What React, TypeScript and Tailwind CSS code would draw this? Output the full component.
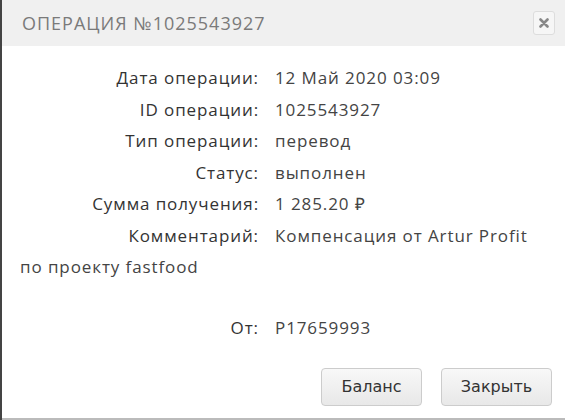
import React from 'react';

const rows: { label: string; value: string }[] = [
  { label: 'Дата операции:', value: '12 Май 2020 03:09' },
  { label: 'ID операции:', value: '1025543927' },
  { label: 'Тип операции:', value: 'перевод' },
  { label: 'Статус:', value: 'выполнен' },
  { label: 'Сумма получения:', value: '1 285.20 ₽' },
  { label: 'Комментарий:', value: 'Компенсация от Artur Profit' },
];

const Row: React.FC<{ label: string; value: string }> = ({ label, value }) => (
  <div className="flex h-[31.5px] items-center">
    <div className="w-[257px] text-right text-[#333]">{label}</div>
    <div className="pl-[16px] text-[#444]">{value}</div>
  </div>
);

const App: React.FC = () => {
  return (
    <div
      className="relative h-[420px] w-[565px] overflow-hidden border-l-2 border-l-[#444] bg-white"
      style={{ fontFamily: '"Open Sans", sans-serif' }}
    >
      <div className="flex h-[46px] items-center justify-between bg-[#f0f0f0] pl-[20px] pr-[10px]">
        <h1 className="text-[18px] tracking-[1px] text-[#7a7a7a]">ОПЕРАЦИЯ №1025543927</h1>
        <button className="flex h-[24px] w-[22px] items-center justify-center rounded-[3px] border border-[#ddd] bg-[#f6f6f6]">
          <svg width="10" height="10" viewBox="0 0 10 10">
            <path d="M1.5 1.5 L8.5 8.5 M8.5 1.5 L1.5 8.5" stroke="#888" strokeWidth="2.6" strokeLinecap="round" />
          </svg>
        </button>
      </div>

      <div className="pt-[16px] text-[17px] tracking-[0.9px]">
        {rows.map((r) => (
          <Row key={r.label} label={r.label} value={r.value} />
        ))}
        <div className="flex h-[31.5px] items-center pl-[18px] text-[#444]">по проекту fastfood</div>
        <div className="h-[29px]" />
        <Row label="От:" value="P17659993" />
      </div>

      <div className="absolute bottom-[14px] right-[13px] flex gap-[19px]" style={{ fontFamily: '"DejaVu Sans", sans-serif' }}>
        <button className="h-[38px] w-[101px] rounded-[4px] border border-[#ccc] bg-gradient-to-b from-[#f8f8f8] to-[#e8e8e8] text-[16px] text-[#333]">
          Баланс
        </button>
        <button className="h-[38px] w-[111px] rounded-[4px] border border-[#ccc] bg-gradient-to-b from-[#f8f8f8] to-[#e8e8e8] text-[16px] text-[#333]">
          Закрыть
        </button>
      </div>

      <div className="absolute bottom-0 left-0 right-0 h-[2px] bg-[#bbb]" />
    </div>
  );
};

export default App;
